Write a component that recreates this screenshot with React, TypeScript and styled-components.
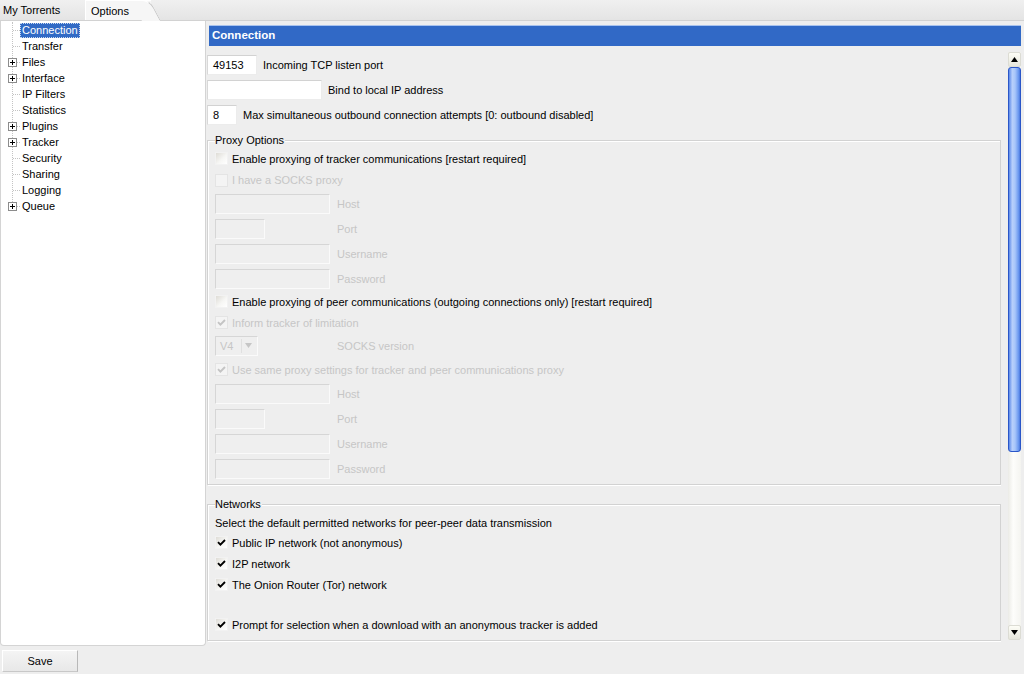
import React from 'react';
import styled, { createGlobalStyle, css } from 'styled-components';

const GlobalStyle = createGlobalStyle`
  html, body {
    margin: 0;
    padding: 0;
    background: #eeeeee;
  }
  body {
    font-family: "Liberation Sans", Arial, sans-serif;
    font-size: 11px;
    color: #000;
  }
  * {
    box-sizing: border-box;
  }
`;

const Window = styled.div`
  width: 1024px;
  height: 674px;
  display: flex;
  flex-direction: column;
  overflow: hidden;
  background: #eeeeee;
`;

const TabBar = styled.div`
  height: 21px;
  display: flex;
  background: linear-gradient(#f0f0f0, #e4e4e4);
  border-bottom: 1px solid #d2d2d2;
`;

const Tab = styled.div<{ $active?: boolean }>`
  position: relative;
  height: 20px;
  line-height: 21px;
  padding-left: 3px;
  width: 85px;
  ${p => p.$active && css`
    width: 66px;
    padding-left: 5px;
    background: #f6f6f6;
    border-left: 1px solid #fff;
    border-top: 1px solid #fff;
    &::after {
      content: '';
      position: absolute;
      top: -1px;
      right: -10px;
      width: 18px;
      height: 20px;
      background: #f6f6f6;
      border-top: 1px solid #fff;
      border-right: 1px solid #c4c4c4;
      border-top-right-radius: 8px;
      transform: skewX(28deg);
      transform-origin: bottom left;
    }
  `}
`;

const Body = styled.div`
  flex: 1;
  display: flex;
  min-height: 0;
`;

const Sidebar = styled.div`
  width: 206px;
  padding-top: 1px;
  background: #fff;
  border: 1px solid #d4d4d4;
  border-top: none;
  border-radius: 0 0 4px 4px;
`;

const Tree = styled.div`
  position: relative;
  &::before {
    content: '';
    position: absolute;
    left: 11px;
    top: 0;
    height: 184px;
    border-left: 1px dotted #c4c4c4;
  }
`;

const TreeRow = styled.div`
  position: relative;
  height: 16px;
  display: flex;
  align-items: center;
`;

const Gutter = styled.span`
  position: relative;
  width: 19px;
  height: 16px;
  flex: none;
  &::before {
    content: '';
    position: absolute;
    left: 12px;
    top: 8px;
    width: 7px;
    border-top: 1px dotted #c4c4c4;
  }
`;

const PlusBox = styled.span`
  position: absolute;
  left: 7px;
  top: 4px;
  width: 9px;
  height: 9px;
  background: #fff;
  border: 1px solid #8c8c8c;
  z-index: 1;
  &::before,
  &::after {
    content: '';
    position: absolute;
    background: #000;
  }
  &::before {
    left: 1px;
    top: 3px;
    width: 5px;
    height: 1px;
  }
  &::after {
    left: 3px;
    top: 1px;
    width: 1px;
    height: 5px;
  }
`;

const TreeLabel = styled.span<{ $selected?: boolean }>`
  padding: 0 1px;
  height: 15px;
  line-height: 13px;
  border: 1px dotted transparent;
  ${p => p.$selected && css`
    background: #316ac5;
    color: #fff;
    border-color: #c8d8f0;
  `}
`;

const RightPanel = styled.div`
  flex: 1;
  display: flex;
  flex-direction: column;
  padding: 4px 3px 4px 1px;
  min-width: 0;
`;

const HeaderBar = styled.div`
  height: 21px;
  margin-left: 2px;
  padding-left: 3px;
  background: #3169c6;
  border-top: 1px solid #a9c3ee;
  color: #fff;
  font-weight: bold;
  font-size: 11.5px;
  line-height: 19px;
`;

const ScrollArea = styled.div`
  flex: 1;
  margin-top: 6px;
  display: flex;
  min-height: 0;
`;

const Content = styled.div`
  flex: 1;
  margin-right: 7px;
  overflow: hidden;
`;

const InlineRow = styled.div`
  height: 25px;
  display: flex;
  align-items: center;
  gap: 6px;
`;

const TextBox = styled.div<{ $w: number; $disabled?: boolean }>`
  width: ${p => p.$w}px;
  height: 20px;
  padding: 0 5px;
  line-height: 18px;
  background: #fff;
  border: 1px solid #ececec;
  border-top-color: #d2d2d2;
  border-left-color: #d8d8d8;
  flex: none;
  ${p => p.$disabled && css`
    background: #efefef;
    border-color: #fafafa;
    border-top-color: #d6d6d6;
    border-left-color: #d6d6d6;
    color: #c8c8c8;
  `}
`;

const Group = styled.fieldset<{ $pt: number; $pb: number }>`
  margin: 0;
  padding: ${p => p.$pt}px 7px ${p => p.$pb}px;
  border: 1px solid #d2d2d2;
  box-shadow: inset 1px 1px 0 #fff, 1px 1px 0 #fff;
  min-width: 0;
`;

const Legend = styled.legend`
  padding: 0 1px 0 0;
  background: #eeeeee;
  line-height: 13px;
`;

const FieldRow = styled.div`
  height: 25px;
  display: grid;
  grid-template-columns: 122px auto;
  align-items: center;
`;

const CheckRow = styled.div<{ $h?: number }>`
  height: ${p => p.$h ?? 21}px;
  display: flex;
  align-items: center;
  gap: 4px;
`;

const Box = styled.span<{ $disabled?: boolean }>`
  width: 13px;
  height: 13px;
  flex: none;
  display: flex;
  align-items: center;
  justify-content: center;
  background: linear-gradient(135deg, #dedcd6, #f6f6f4 55%, #fff);
  border: 1px solid #f2f2f2;
  color: #000;
  ${p => p.$disabled && css`
    background: #f4f4f4;
    border-color: #e4e4e4;
    color: #c4c4c4;
  `}
`;

const Text = styled.span<{ $disabled?: boolean }>`
  white-space: nowrap;
  color: ${p => (p.$disabled ? '#c6c6c6' : '#000')};
`;

const NoteRow = styled.div`
  height: 19px;
  display: flex;
  align-items: center;
`;

const Spacer = styled.div<{ $h: number }>`
  height: ${p => p.$h}px;
`;

const Select = styled.div`
  width: 43px;
  height: 20px;
  display: flex;
  align-items: center;
  justify-content: space-between;
  padding: 0 2px 0 4px;
  background: #efefef;
  border: 1px solid #fafafa;
  border-top-color: #d6d6d6;
  border-left-color: #d6d6d6;
  color: #c6c6c6;
`;

const SelectArrow = styled.span`
  width: 14px;
  height: 14px;
  display: flex;
  align-items: center;
  justify-content: center;
  border-left: 1px solid #e0e0e0;
`;

const Scrollbar = styled.div`
  width: 13px;
  flex: none;
  margin-bottom: 2px;
  display: flex;
  flex-direction: column;
  background: linear-gradient(to right, #ebebe6, #fdfdfb 40%, #f4f4f0);
`;

const ArrowButton = styled.div`
  height: 15px;
  flex: none;
  display: flex;
  align-items: center;
  justify-content: center;
  background: linear-gradient(#fdfdf6, #e6e6dc);
  border: 1px solid #dcdcd4;
  border-radius: 2px;
`;

const Thumb = styled.div`
  height: 385px;
  flex: none;
  border: 1px solid #2a56c8;
  border-radius: 3px;
  background: linear-gradient(to right, #5a88e8, #b8d0fb 30%, #a8c6fa 55%, #6d9af0 85%, #4a78de);
`;

const Track = styled.div`
  flex: 1;
`;

const Footer = styled.div`
  height: 28px;
  flex: none;
  padding: 4px 0 0 2px;
`;

const Button = styled.div`
  width: 76px;
  height: 22px;
  line-height: 21px;
  text-align: center;
  background: linear-gradient(#f4f4f4, #e8e8e8);
  border: 1px solid #fff;
  border-right-color: #b8b8b8;
  border-bottom-color: #c8c8c8;
`;

const Check = ({ color = 'currentColor' }: { color?: string }) => (
  <svg width="9" height="9" viewBox="0 0 9 9">
    <path d="M1 4.2 L3.4 6.6 L8 2" fill="none" stroke={color} strokeWidth="1.9" />
  </svg>
);

const Triangle = ({ up, color = '#000' }: { up?: boolean; color?: string }) => (
  <svg width="7" height="5" viewBox="0 0 7 5">
    <path d={up ? 'M0 5 L3.5 0 L7 5 Z' : 'M0 0 L7 0 L3.5 5 Z'} fill={color} />
  </svg>
);

interface TreeItem {
  text: string;
  expandable?: boolean;
}

const treeItems: TreeItem[] = [
  { text: 'Connection' },
  { text: 'Transfer' },
  { text: 'Files', expandable: true },
  { text: 'Interface', expandable: true },
  { text: 'IP Filters' },
  { text: 'Statistics' },
  { text: 'Plugins', expandable: true },
  { text: 'Tracker', expandable: true },
  { text: 'Security' },
  { text: 'Sharing' },
  { text: 'Logging' },
  { text: 'Queue', expandable: true },
];

function CheckOption({ text, checked, disabled, h }: { text: string; checked?: boolean; disabled?: boolean; h?: number }) {
  return (
    <CheckRow $h={h}>
      <Box $disabled={disabled}>{checked && <Check />}</Box>
      <Text $disabled={disabled}>{text}</Text>
    </CheckRow>
  );
}

function DisabledField({ label, w }: { label: string; w: number }) {
  return (
    <FieldRow>
      <TextBox $w={w} $disabled />
      <Text $disabled>{label}</Text>
    </FieldRow>
  );
}

function App() {
  return (
    <Window>
      <GlobalStyle />
      <TabBar>
        <Tab>My Torrents</Tab>
        <Tab $active>Options</Tab>
      </TabBar>
      <Body>
        <Sidebar>
          <Tree>
            {treeItems.map((item, i) => (
              <TreeRow key={item.text}>
                <Gutter>{item.expandable && <PlusBox />}</Gutter>
                <TreeLabel $selected={i === 0}>{item.text}</TreeLabel>
              </TreeRow>
            ))}
          </Tree>
        </Sidebar>
        <RightPanel>
          <HeaderBar>Connection</HeaderBar>
          <ScrollArea>
            <Content>
              <InlineRow>
                <TextBox $w={50}>49153</TextBox>
                <Text>Incoming TCP listen port</Text>
              </InlineRow>
              <InlineRow>
                <TextBox $w={115} />
                <Text>Bind to local IP address</Text>
              </InlineRow>
              <InlineRow>
                <TextBox $w={30}>8</TextBox>
                <Text>Max simultaneous outbound connection attempts [0: outbound disabled]</Text>
              </InlineRow>
              <Spacer $h={7} />
              <Group $pt={1} $pb={3}>
                <Legend>Proxy Options</Legend>
                <CheckOption text="Enable proxying of tracker communications [restart required]" />
                <CheckOption text="I have a SOCKS proxy" disabled h={22} />
                <DisabledField label="Host" w={115} />
                <DisabledField label="Port" w={50} />
                <DisabledField label="Username" w={115} />
                <DisabledField label="Password" w={115} />
                <CheckOption text="Enable proxying of peer communications (outgoing connections only) [restart required]" />
                <CheckOption text="Inform tracker of limitation" checked disabled />
                <FieldRow>
                  <Select>
                    V4
                    <SelectArrow>
                      <Triangle color="#c6c6c6" />
                    </SelectArrow>
                  </Select>
                  <Text $disabled>SOCKS version</Text>
                </FieldRow>
                <CheckOption text="Use same proxy settings for tracker and peer communications proxy" checked disabled h={23} />
                <DisabledField label="Host" w={115} />
                <DisabledField label="Port" w={50} />
                <DisabledField label="Username" w={115} />
                <DisabledField label="Password" w={115} />
              </Group>
              <Spacer $h={13} />
              <Group $pt={2} $pb={5}>
                <Legend>Networks</Legend>
                <NoteRow>
                  <Text>Select the default permitted networks for peer-peer data transmission</Text>
                </NoteRow>
                <CheckOption text="Public IP network (not anonymous)" checked />
                <CheckOption text="I2P network" checked />
                <CheckOption text="The Onion Router (Tor) network" checked />
                <Spacer $h={19} />
                <CheckOption text="Prompt for selection when a download with an anonymous tracker is added" checked />
              </Group>
            </Content>
            <Scrollbar>
              <ArrowButton>
                <Triangle up />
              </ArrowButton>
              <Thumb />
              <Track />
              <ArrowButton>
                <Triangle />
              </ArrowButton>
            </Scrollbar>
          </ScrollArea>
        </RightPanel>
      </Body>
      <Footer>
        <Button>Save</Button>
      </Footer>
    </Window>
  );
}

export default App;
